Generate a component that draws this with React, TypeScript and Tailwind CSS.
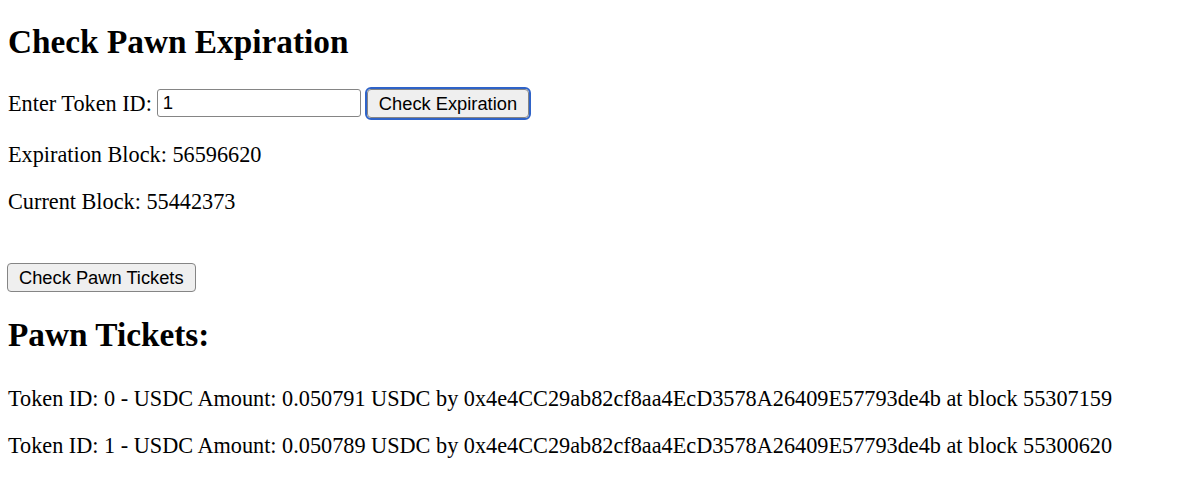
import React, { useState } from 'react';

const tickets = [
  { id: 0, amount: '0.050791', owner: '0x4e4CC29ab82cf8aa4EcD3578A26409E57793de4b', block: 55307159 },
  { id: 1, amount: '0.050789', owner: '0x4e4CC29ab82cf8aa4EcD3578A26409E57793de4b', block: 55300620 },
];

const App: React.FC = () => {
  const [tokenId, setTokenId] = useState<string>('1');

  return (
    <div className="min-h-screen bg-white px-[8px] pt-[23px] font-['Liberation_Serif',serif] text-[22.25px] leading-[25px] text-black">
      <h1 className="text-[33.3px] font-bold leading-[38px]">Check Pawn Expiration</h1>

      <div className="mt-[27px] flex h-[30px] items-center">
        <span>Enter Token ID:</span>
        <input
          type="text"
          value={tokenId}
          onChange={(e) => setTokenId(e.target.value)}
          className="ml-[5px] h-[28px] w-[204px] rounded-[3px] border border-[#858585] bg-white px-[5px] font-['Liberation_Sans',sans-serif] text-[18.5px] outline-none"
        />
        <button className="ml-[6px] h-[29px] rounded-[4px] border border-[#858585] bg-[#efefef] px-[11px] font-['Liberation_Sans',sans-serif] text-[18.3px] leading-[21px] outline-[2.5px] outline-[#2f63c8] outline-offset-0 [outline-style:solid]">
          Check Expiration
        </button>
      </div>

      <p className="mt-[24px]">Expiration Block: 56596620</p>
      <p className="mt-[22px]">Current Block: 55442373</p>

      <button className="-ml-[1px] mt-[49px] block h-[29px] rounded-[4px] border border-[#858585] bg-[#efefef] px-[11px] font-['Liberation_Sans',sans-serif] text-[18.3px] leading-[21px]">
        Check Pawn Tickets
      </button>

      <h2 className="mt-[24px] text-[33.3px] font-bold leading-[38px]">Pawn Tickets:</h2>

      <div className="mt-[32px]">
        {tickets.map((t) => (
          <p key={t.id} className="mb-[22px]">
            Token ID: {t.id} - USDC Amount: {t.amount} USDC by {t.owner} at block {t.block}
          </p>
        ))}
      </div>
    </div>
  );
};

export default App;
